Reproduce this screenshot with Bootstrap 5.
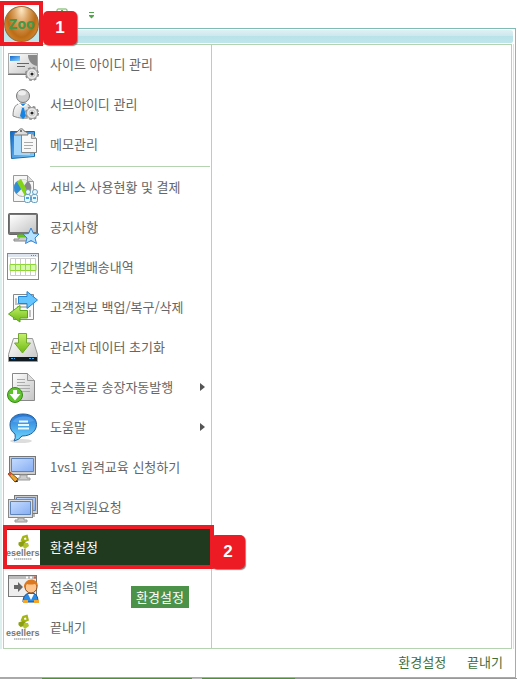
<!DOCTYPE html>
<html lang="ko">
<head>
<meta charset="utf-8">
<meta name="viewport" content="width=device-width, initial-scale=1">
<title>환경설정</title>
<link href="https://cdn.jsdelivr.net/npm/bootstrap@5.3.0/dist/css/bootstrap.min.css" rel="stylesheet">
<style>
body { font: 13px/20px "Noto Sans CJK KR", sans-serif; color: #666; background: #fff; }
button { font: inherit; color: inherit; border: 0; background: none; padding: 0; }
svg { display: block; flex: none; overflow: visible; }
.topbar { height: 28px; }
.orb { left: 0; top: 1px; width: 43px; height: 45px; border: 4px solid #ed1c24; background: linear-gradient(#fff 24px, #bfe5eb 24px); z-index: 3; }
.orb-face { width: 35px; height: 36px; border-radius: 50%; background: radial-gradient(ellipse at 50% 8%, #ffe8c4 0, #dca566 30%, #bb6c16 62%, #ef9c3b 100%); border: 1px solid #986b3b; color: #489646; font: bold 14px/34px "DejaVu Sans Condensed", "DejaVu Sans", sans-serif; }
.step { width: 34px; height: 34px; border-radius: 5px; background: #ed1c24; color: #fff; font: bold 17px/34px "Liberation Sans", sans-serif; box-shadow: 1px 1px 1px #888; text-align: center; z-index: 4; }
.step-one { left: 43px; top: 11px; }
.step-two { left: 207px; top: 8px; }
.quick { padding-left: 56px; padding-top: 8px; gap: 20px; }
.frame { border: 1px solid #80bcb4; border-left: 0; margin-right: 1px; }
.ribbon { height: 15px; margin: 0 2px 0 0; border: solid #fff; border-width: 1px 0; border-radius: 3px; background: linear-gradient(#def0f4 0, #cce8ee 6px, #b9e2e9 6px, #bee6eb 100%); }
.middle { padding: 0 3px 0 1px; background: linear-gradient(#def0ee, #def0ee) left / 2px 100% no-repeat, linear-gradient(#c7eaf0, #c7eaf0) right 1px top / 1px 100% no-repeat; }
.panel-box { border: 1px solid #b5d3b0; background: #fff; margin-left: 2px; }
.menu { width: 208px; border-right: 1px solid #b5d3b0; padding-bottom: 1px; }
.entry { height: 40px; padding-left: 3px; gap: 9px; text-align: left; width: 100%; }
.entry .caret { margin-left: auto; margin-right: 6px; }
.top-group .entry { height: 40px; padding-bottom: 2px; }
.rule { height: 1px; margin: 1px 1px 0 46px; background: #b5d3b0; }
.picked { background: #1f3a1e; color: #fff; }
.ring { left: -1px; right: -3px; top: -2px; bottom: -2px; border: 4px solid #ed1c24; pointer-events: none; z-index: 2; }
.tip { left: 127px; top: 19px; height: 22px; padding: 0 5px; background: #4d9249; color: #fff; line-height: 21px; z-index: 2; }
.foot { height: 28px; padding-right: 12px; padding-bottom: 2px; gap: 21px; color: #3c6e3a; }
.ground { height: 1px; background: linear-gradient(90deg, #aaa 42px, #558c42 42px 192px, #bbb 192px 202px, #558c42 202px 295px, #999 295px); }
</style>
<script src="https://cdn.jsdelivr.net/npm/bootstrap@5.3.0/dist/js/bootstrap.bundle.min.js"></script>
</head>
<body class="d-flex flex-column min-vh-100 position-relative">
<svg width="0" height="0" class="position-absolute" aria-hidden="true">
<defs>
<linearGradient id="gray" x1="0" y1="0" x2="1" y2="1"><stop stop-color="#fff"/><stop offset="1" stop-color="#c4c4c4"/></linearGradient>
<linearGradient id="blue" x1="0" y1="0" x2="1" y2="1"><stop stop-color="#1268cc"/><stop offset="1" stop-color="#8bd6ff"/></linearGradient>
<linearGradient id="sky" x1="0" y1="0" x2="0" y2="1"><stop stop-color="#2374d5"/><stop offset="1" stop-color="#73dcff"/></linearGradient>
<linearGradient id="lime" x1="0" y1="0" x2="0" y2="1"><stop stop-color="#c5f16c"/><stop offset="1" stop-color="#6cb910"/></linearGradient>
<linearGradient id="screen" x1="0" y1="0" x2="1" y2="1"><stop stop-color="#c6dcff"/><stop offset="1" stop-color="#86aef3"/></linearGradient>
<g id="gear"><circle r="6" fill="#ddd" stroke="#888" stroke-width="2" stroke-dasharray="2.700 2.010"/><circle r="5.500" fill="#e8e8e8" stroke="#999"/><circle r="2.800" fill="#fff" stroke="#aaa" stroke-width=".6"/><circle r="1.600" fill="#222"/></g>
<g id="brand"><path d="M15.500 6l5-1.500 1.500 6-4.500 2-4-2z" fill="#a4b510"/><path d="M11.500 12.500l4-1.500 3 1-1 4-4 1-2-2z" fill="#8b9e12"/><path d="M17 13l4 0 1 3-4 3-2-2z" fill="#b3c42c"/><path d="M17 8l2-.5.500 2-2 .5z" fill="#fff"/><text x="-1" y="26" font-family="Liberation Sans, sans-serif" font-weight="bold" font-size="9" fill="#777">esellers</text><path d="M7 29h18" stroke="#aaa" stroke-width="1.500" stroke-dasharray="1.500 .5"/></g>
</defs>
</svg>

<header class="topbar">
<div class="quick d-flex" aria-hidden="true">
<svg width="12" height="12" viewBox="0 0 12 12"><rect x="1" y="1" width="10" height="9" rx="1" fill="#fff" stroke="#65ad55"/><path d="M3 5l3-3 3 3" fill="none" stroke="#65ad55"/></svg>
<svg width="8" height="12" viewBox="0 0 8 12"><path d="M1 4h5v1H1z" fill="#55a34e"/><path d="M1 7h5v1L3.500 10.500 1 8z" fill="#55a34e"/></svg>
</div>
<button type="button" class="orb position-absolute d-flex align-items-center justify-content-center"><span class="orb-face d-block text-center">Zoo</span></button>
<span class="step step-one position-absolute">1</span>
</header>

<main class="frame d-flex flex-column flex-grow-1">
<div class="ribbon"></div>
<div class="middle flex-grow-1 d-flex">
<div class="panel-box d-flex flex-grow-1">
<nav class="menu flex-shrink-0">
<div class="top-group">
<button type="button" class="entry d-flex align-items-center"><svg width="34" height="34" viewBox="0 0 34 34"><rect x="1.500" y="6.500" width="29" height="20" fill="url(#gray)" stroke="#aaa"/><path d="M1 27.500h29" stroke="#777"/><path d="M3 9h10v5H3z" fill="url(#blue)"/><path d="M21 8h9v11c-5-1-9-5-9-11z" fill="#888"/><path d="M10 16.500h12M10 19.500h8" stroke="#666"/><use href="#gear" x="25" y="27"/></svg>사이트 아이디 관리</button>
<button type="button" class="entry d-flex align-items-center"><svg width="34" height="34" viewBox="0 0 34 34"><path d="M6 29c0-9 3-13 10-13s9 5 9 14q-10 3-19-1z" fill="url(#gray)" stroke="#888"/><path d="M14 17h4l-1 4 2 8-3 3-3-3 2-8z" fill="#1684e4"/><circle cx="16" cy="9" r="6.500" fill="#ccc" stroke="#777"/><ellipse cx="15" cy="6" rx="4" ry="2.500" fill="#eee"/><path d="M11 16l5 4 5-4" fill="none" stroke="#fff" stroke-width="1.500"/><use href="#gear" x="25" y="26"/></svg>서브아이디 관리</button>
<button type="button" class="entry d-flex align-items-center"><svg width="34" height="34" viewBox="0 0 34 34"><path d="M3.500 4.500h24v25l-23 2z" fill="url(#blue)" stroke="#166dac"/><path d="M7 8h16v20H7z" fill="#a5d7fa"/><path d="M14.500 6.500h10l5 5v14h-15z" fill="#f8f8f8" stroke="#888"/><path d="M24.500 6.500v5h5" fill="#ccc" stroke="#999"/><path d="M17 15.500h9M17 18.500h9M17 21.500h7" stroke="#aaa"/><path d="M7 8c0-3 3-2 4-4 2-3 5-3 6 0 2 1 4 1 4 4z" fill="#ddd" stroke="#777"/><circle cx="14" cy="4" r="1" fill="#555"/></svg>메모관리</button>
</div>
<div class="rule"></div>
<button type="button" class="entry d-flex align-items-center"><svg width="34" height="34" viewBox="0 0 34 34"><path d="M6.500 5.500h14l6 6v20h-20z" fill="#f7f7f7" stroke="#999"/><path d="M20.500 5.500v6h6" fill="#ddd" stroke="#999"/><circle cx="15.500" cy="18" r="8.500" fill="#f1f1f1" stroke="#aaa"/><path d="M15.500 18l-5-7a8.500 8.500 0 0 1 10 0z" fill="#e4efe1"/><path d="M15.500 18l-5-7a8.500 8.500 0 0 0-1 13z" fill="#328dd7"/><path d="M15.500 18l5-7a8.500 8.500 0 0 1 1 13z" fill="#85868a"/><path d="M14 9l8 15-4 2-8-14z" fill="#83d316"/><g fill="#e9f7ff" stroke="#6a9ebc"><circle cx="21" cy="22" r="2.500"/><circle cx="28" cy="22" r="2.500"/><rect x="17.500" y="24.500" width="6" height="8" rx="2"/><rect x="24.500" y="24.500" width="6" height="8" rx="2"/></g><path d="M19 28h3M26 28h3" stroke="#46a7e8" stroke-width="2"/></svg>서비스 사용현황 및 결제</button>
<button type="button" class="entry d-flex align-items-center"><svg width="34" height="34" viewBox="0 0 34 34"><rect x="1.500" y="3.500" width="29" height="21" rx="1" fill="#777" stroke="#666"/><path d="M3 5h26v17H3z" fill="url(#gray)"/><path d="M12 25h8v4h5v2H7v-2h5z" fill="#ccc" stroke="#888"/><path d="M10 26h12" stroke="#60c51a" stroke-width="3"/><path d="M24 18l2.500 5.500 5.500.5-4 4 1.500 5.500-5.500-3-5.500 3 1.500-5.500-4-4 5.500-.5z" fill="#b5e2ff" stroke="#3482d4" stroke-linejoin="round"/></svg>공지사항</button>
<button type="button" class="entry d-flex align-items-center"><svg width="34" height="34" viewBox="0 0 34 34"><rect x=".5" y="3.500" width="31" height="26" fill="#fff" stroke="#888"/><path d="M1 4h30v3H1z" fill="#dde4ed"/><path d="M24 5.500h5" stroke="#5c86b4" stroke-dasharray="1 1"/><path d="M3.500 8.500h25v17h-25zM8.500 8.500v17M13.500 8.500v17M18.500 8.500v17M23.500 8.500v17" fill="none" stroke="#ccc"/><path d="M3 14.500h26v6H3z" fill="#d6f7ae" stroke="#8ed536"/><path d="M8.500 14v7M13.500 14v7M18.500 14v7M23.500 14v7" stroke="#93da43"/></svg>기간별배송내역</button>
<button type="button" class="entry d-flex align-items-center"><svg width="34" height="34" viewBox="0 0 34 34"><path d="M6.500 4.500h20v25h-20z" fill="#fafafa" stroke="#888"/><path d="M9 8v7M23 20v7M10 14h12M10 17h12" stroke="#888"/><path d="M11.500 6.500H20V1.500L30.500 10 20 18.500v-5h-8.500z" fill="#65c5ff" stroke="#2583d4"/><path d="M20.500 20.500H13v-5L1.500 24 13 32v-4h7.500z" fill="url(#lime)" stroke="#5aa71b"/></svg>고객정보 백업/복구/삭제</button>
<button type="button" class="entry d-flex align-items-center"><svg width="34" height="34" viewBox="0 0 34 34"><path d="M6.500 8.500h19l5 16v7h-29v-7z" fill="url(#gray)" stroke="#999"/><path d="M2 27h28v4H2z" fill="#101820"/><path d="M4 28.500h4M22 28.500h6" stroke="#36aaf0" stroke-dasharray="2 1"/><path d="M11.500 3.500h8V13h4L15.500 23 7.500 13h4z" fill="url(#lime)" stroke="#72a92c"/></svg>관리자 데이터 초기화</button>
<button type="button" class="entry d-flex align-items-center"><svg width="34" height="34" viewBox="0 0 34 34"><path d="M5.500 3.500h15l7 7v20h-22z" fill="url(#gray)" stroke="#888"/><path d="M20.500 3.500v7h7" fill="#ddd" stroke="#999"/><path d="M10 9.500h8M10 12.500h8M10 15.500h13M10 18.500h13M14 21.500h9" stroke="#aaa"/><circle cx="8" cy="25" r="7.500" fill="#5fc32c" stroke="#378b16"/><path d="M6 20h4v4h3.500L8 30.500 2.500 24H6z" fill="#fff"/></svg>굿스플로 송장자동발행<svg class="caret" width="5" height="8" viewBox="0 0 5 8"><path d="M0 0l5 4-5 4z" fill="#555"/></svg></button>
<button type="button" class="entry d-flex align-items-center"><svg width="34" height="34" viewBox="0 0 34 34"><ellipse cx="14" cy="31" rx="11" ry="2" fill="#ddd"/><path d="M16 4c8 0 13.500 4 13.500 10.500S24 26 15 26q-3 4-8 5 2-3 1-7c-3-2-5-5-5-9C3 8 8 4 16 4z" fill="url(#sky)" stroke="#245f9e"/><path d="M6 12C7 6 24 4 27 11q-10 3-21 1z" fill="#69aff1" opacity=".6"/><path d="M12 11.500h9M11 15h11M11 18.500h11" stroke="#e7f8ff" stroke-width="2"/></svg>도움말<svg class="caret" width="5" height="8" viewBox="0 0 5 8"><path d="M0 0l5 4-5 4z" fill="#555"/></svg></button>
<button type="button" class="entry d-flex align-items-center"><svg width="34" height="34" viewBox="0 0 34 34"><rect x="2.500" y="6.500" width="26" height="18" fill="#ccc" stroke="#777"/><path d="M4.500 8.500h22v13h-22z" fill="url(#screen)" stroke="#5e84be"/><path d="M13 25h7v3h3v2H11v-2h2z" fill="#ccc" stroke="#999"/><path d="M3 22l8 7-1 2-2 1-7-8z" fill="#f4a52c" stroke="#735015"/><path d="M1 24l2-2 2 2-2 2z" fill="#dc4e37"/><path d="M8 32l3 0-1-2z" fill="#222"/></svg>1vs1 원격교육 신청하기</button>
<button type="button" class="entry d-flex align-items-center"><svg width="34" height="34" viewBox="0 0 34 34"><rect x="7.500" y="5.500" width="23" height="18" fill="#ccc" stroke="#777"/><path d="M9.500 7.500h19v13h-19z" fill="url(#screen)" stroke="#5e84be"/><path d="M22 24h6v3h-6z" fill="#bbb"/><rect x="1.500" y="9.500" width="24" height="18" fill="#ddd" stroke="#888"/><path d="M3.500 11.500h20v13h-20z" fill="url(#screen)" stroke="#5e84be"/><path d="M11 28h6v2h3v2H8v-2h3z" fill="#ccc" stroke="#999"/></svg>원격지원요청</button>
<div class="position-relative">
<button type="button" class="entry picked d-flex align-items-center"><svg width="34" height="34" viewBox="0 0 34 34"><path d="M0 0h33v35H0z" fill="#fff"/><use href="#brand"/></svg>환경설정</button>
<span class="ring position-absolute"></span>
<span class="step step-two position-absolute">2</span>
</div>
<div class="position-relative">
<button type="button" class="entry d-flex align-items-center"><svg width="34" height="34" viewBox="0 0 34 34"><rect x="1.500" y="5.500" width="28" height="21" fill="#eee" stroke="#777"/><path d="M2 6h27v3H2z" fill="#bbb"/><path d="M19 7.500h2M23 7.500h2" stroke="#fff" stroke-width="2"/><path d="M27 7.500h2" stroke="#e45833" stroke-width="2"/><path d="M7 15h4v-3l5 5-5 5v-3H7z" fill="#666"/><path d="M16 32c0-6 3-9 8-9s7 3 7 9z" fill="#278be7" stroke="#174c8a"/><path d="M21 24h6l-3 6z" fill="#fff"/><circle cx="24" cy="17" r="6" fill="#ffc58c" stroke="#8b4a16"/><path d="M17 18c-1-10 14-12 14-1l-3-3q-5 1-8 0z" fill="#dc7820"/><path d="M16 30h5v3h-5zM27 30h5v3h-5z" fill="#f4a52c"/></svg>접속이력</button>
<span class="tip position-absolute" role="tooltip">환경설정</span>
</div>
<button type="button" class="entry d-flex align-items-center"><svg width="34" height="34" viewBox="0 0 34 34"><use href="#brand"/></svg>끝내기</button>
</nav>
<section class="flex-grow-1"></section>
</div>
</div>
<footer class="foot d-flex justify-content-end align-items-center">
<button type="button">환경설정</button>
<button type="button">끝내기</button>
</footer>
</main>
<div class="ground"></div>
</body>
</html>
